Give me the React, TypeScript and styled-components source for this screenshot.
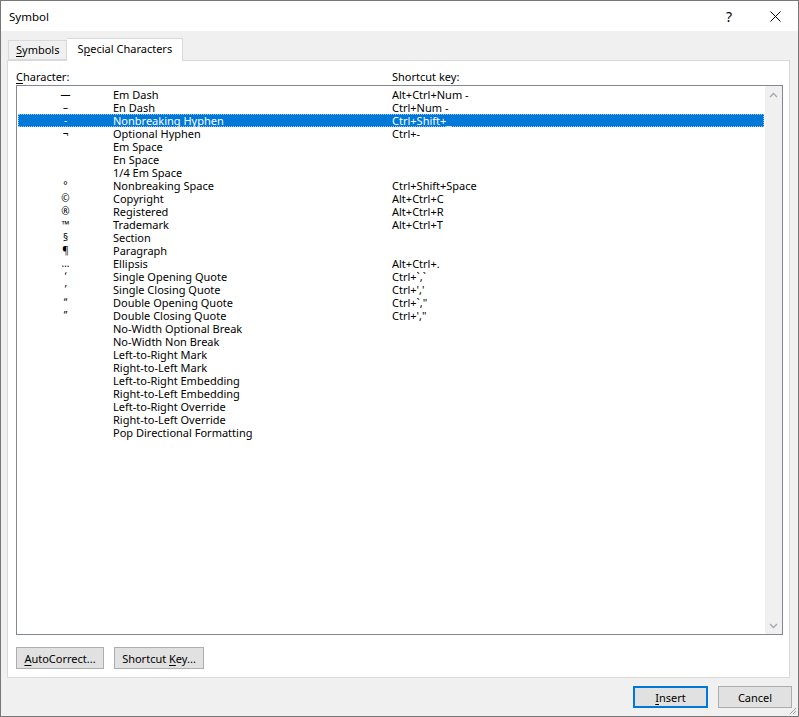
import React from "react";
import styled, { createGlobalStyle } from "styled-components";

const GlobalStyle = createGlobalStyle`
  html, body {
    margin: 0;
    padding: 0;
    background: #ffffff;
  }
  body {
    font-family: "Noto Sans", "Liberation Sans", sans-serif;
    font-size: 11px;
    color: #000;
  }
  * {
    box-sizing: border-box;
  }
`;

const SpecialChars: [string, string, string][] = [
  ["\u2014", "Em Dash", "Alt+Ctrl+Num -"],
  ["\u2013", "En Dash", "Ctrl+Num -"],
  ["-", "Nonbreaking Hyphen", "Ctrl+Shift+_"],
  ["\u00ac", "Optional Hyphen", "Ctrl+-"],
  ["", "Em Space", ""],
  ["", "En Space", ""],
  ["", "1/4 Em Space", ""],
  ["\u00b0", "Nonbreaking Space", "Ctrl+Shift+Space"],
  ["\u00a9", "Copyright", "Alt+Ctrl+C"],
  ["\u00ae", "Registered", "Alt+Ctrl+R"],
  ["\u2122", "Trademark", "Alt+Ctrl+T"],
  ["\u00a7", "Section", ""],
  ["\u00b6", "Paragraph", ""],
  ["\u2026", "Ellipsis", "Alt+Ctrl+."],
  ["\u2018", "Single Opening Quote", "Ctrl+`,`"],
  ["\u2019", "Single Closing Quote", "Ctrl+','"],
  ["\u201c", "Double Opening Quote", "Ctrl+`,\""],
  ["\u201d", "Double Closing Quote", "Ctrl+',\""],
  ["", "No-Width Optional Break", ""],
  ["", "No-Width Non Break", ""],
  ["", "Left-to-Right Mark", ""],
  ["", "Right-to-Left Mark", ""],
  ["", "Left-to-Right Embedding", ""],
  ["", "Right-to-Left Embedding", ""],
  ["", "Left-to-Right Override", ""],
  ["", "Right-to-Left Override", ""],
  ["", "Pop Directional Formatting", ""],
];

const SELECTED_INDEX = 2;

const Window = styled.div`
  position: relative;
  width: 799px;
  height: 717px;
  border: 1px solid #777777;
  background: #f0f0f0;
  display: flex;
  flex-direction: column;
  overflow: hidden;
`;

const TitleBar = styled.div`
  height: 30px;
  background: #ffffff;
  display: flex;
  align-items: center;
  padding-left: 8px;
  flex-shrink: 0;
`;

const Title = styled.div`
  flex: 1;
  font-size: 11.5px;
  color: #000;
`;

const TitleButton = styled.div`
  width: 46px;
  height: 30px;
  display: flex;
  align-items: center;
  justify-content: center;
  font-size: 14px;
  color: #000;
`;

const Body = styled.div`
  flex: 1;
  display: flex;
  flex-direction: column;
  padding: 7px 8px 0 6px;
`;

const TabStrip = styled.div`
  height: 22px;
  display: flex;
  align-items: flex-end;
  padding-left: 1px;
  position: relative;
  z-index: 1;
`;

const Tab = styled.div<{ $active?: boolean }>`
  height: ${(p) => (p.$active ? "23px" : "20px")};
  margin-bottom: ${(p) => (p.$active ? "-1px" : "0")};
  padding: ${(p) => (p.$active ? "2px 10px 0" : "1px 7px 0")};
  background: ${(p) => (p.$active ? "#ffffff" : "#f0f0f0")};
  border: 1px solid #d9d9d9;
  border-bottom: ${(p) => (p.$active ? "none" : "1px solid #d9d9d9")};
  border-left: ${(p) => (p.$active ? "none" : "1px solid #d9d9d9")};
  font-size: 11px;
  line-height: 16px;
  white-space: nowrap;
`;

const Panel = styled.div`
  height: 618px;
  background: #ffffff;
  border: 1px solid #d9d9d9;
  padding: 8px 6px 8px 8px;
  display: flex;
  flex-direction: column;
`;

const LabelRow = styled.div`
  display: grid;
  grid-template-columns: 376px 1fr;
  height: 15px;
  line-height: 15px;
  margin-bottom: 1px;
`;

const Mnemonic = styled.span`
  text-decoration: underline;
  text-underline-offset: 2px;
`;

const ListBox = styled.div`
  height: 550px;
  border: 1px solid #828790;
  background: #ffffff;
  display: flex;
`;

const Rows = styled.div`
  flex: 1;
  padding: 2px 1px 0 1px;
`;

const Row = styled.div<{ $selected?: boolean }>`
  display: grid;
  grid-template-columns: 95px 279px 1fr;
  height: 13px;
  line-height: 13px;
  white-space: nowrap;
  background: ${(p) => (p.$selected ? "#0078d7" : "transparent")};
  color: ${(p) => (p.$selected ? "#ffffff" : "#000000")};
  outline: ${(p) => (p.$selected ? "1px dotted rgba(255,255,255,0.55)" : "none")};
  outline-offset: -1px;
`;

const CharCell = styled.span`
  text-align: center;
  font-size: 10px;
`;

const Cell = styled.span`
  display: block;
  height: 13px;
`;

const ScrollBar = styled.div`
  width: 17px;
  background: #f0f0f0;
  display: flex;
  flex-direction: column;
  justify-content: space-between;
`;

const ScrollButton = styled.div`
  width: 17px;
  height: 17px;
  display: flex;
  align-items: center;
  justify-content: center;
`;

const ButtonRow = styled.div`
  display: flex;
  gap: 10px;
  margin-top: 12px;
`;

const Button = styled.div<{ $width: number; $default?: boolean }>`
  width: ${(p) => p.$width}px;
  height: 22px;
  background: #e1e1e1;
  border: ${(p) => (p.$default ? "2px solid #0078d7" : "1px solid #adadad")};
  display: flex;
  align-items: center;
  justify-content: center;
  font-size: 11px;
  white-space: nowrap;
`;

const Footer = styled.div`
  display: flex;
  justify-content: flex-end;
  gap: 10px;
  padding: 8px 0 0;
  margin-right: -2px;
  height: 38px;
`;

const Grip = styled.svg`
  position: absolute;
  right: 1px;
  bottom: 1px;
`;

const ChevronUp = () => (
  <svg width="9" height="6" viewBox="0 0 9 6">
    <path d="M1 5 L4.5 1.5 L8 5" fill="none" stroke="#a6a6a6" strokeWidth="1.3" />
  </svg>
);

const ChevronDown = () => (
  <svg width="9" height="6" viewBox="0 0 9 6">
    <path d="M1 1 L4.5 4.5 L8 1" fill="none" stroke="#a6a6a6" strokeWidth="1.3" />
  </svg>
);

const CloseIcon = () => (
  <svg width="11" height="11" viewBox="0 0 11 11">
    <path d="M0.5 0.5 L10.5 10.5 M10.5 0.5 L0.5 10.5" stroke="#000" strokeWidth="1" />
  </svg>
);

const App: React.FC = () => {
  return (
    <>
      <GlobalStyle />
      <Window>
        <TitleBar>
          <Title>Symbol</Title>
          <TitleButton>?</TitleButton>
          <TitleButton>
            <CloseIcon />
          </TitleButton>
        </TitleBar>
        <Body>
          <TabStrip>
            <Tab>
              <Mnemonic>S</Mnemonic>ymbols
            </Tab>
            <Tab $active>
              S<Mnemonic>p</Mnemonic>ecial Characters
            </Tab>
          </TabStrip>
          <Panel>
            <LabelRow>
              <span>
                <Mnemonic>C</Mnemonic>haracter:
              </span>
              <span>Shortcut key:</span>
            </LabelRow>
            <ListBox>
              <Rows>
                {SpecialChars.map(([ch, name, shortcut], i) => (
                  <Row key={name} $selected={i === SELECTED_INDEX}>
                    <CharCell>{ch}</CharCell>
                    <Cell>{name}</Cell>
                    <Cell>{shortcut}</Cell>
                  </Row>
                ))}
              </Rows>
              <ScrollBar>
                <ScrollButton>
                  <ChevronUp />
                </ScrollButton>
                <ScrollButton>
                  <ChevronDown />
                </ScrollButton>
              </ScrollBar>
            </ListBox>
            <ButtonRow>
              <Button $width={88}>
                <span>
                  <Mnemonic>A</Mnemonic>utoCorrect...
                </span>
              </Button>
              <Button $width={90}>
                <span>
                  Shortcut <Mnemonic>K</Mnemonic>ey...
                </span>
              </Button>
            </ButtonRow>
          </Panel>
          <Footer>
            <Button $width={75} $default>
              <span>
                <Mnemonic>I</Mnemonic>nsert
              </span>
            </Button>
            <Button $width={74}>Cancel</Button>
          </Footer>
        </Body>
        <Grip width="9" height="9" viewBox="0 0 9 9">
          <path d="M8 2 L2 8 M8 5 L5 8" stroke="#a0a0a0" strokeWidth="1" />
        </Grip>
      </Window>
    </>
  );
};

export default App;
